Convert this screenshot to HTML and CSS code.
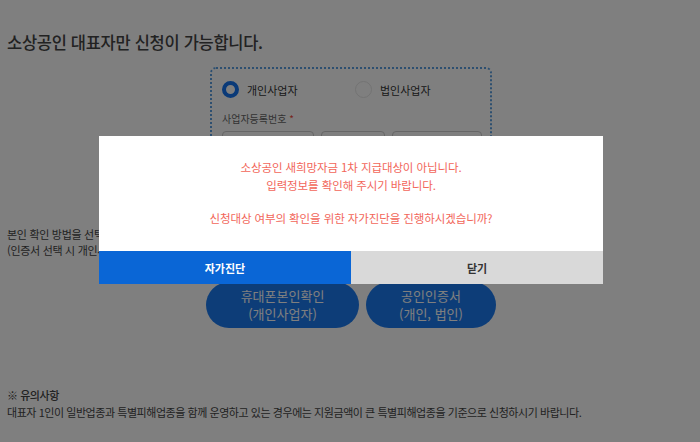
FILE: index.html
```html
<!DOCTYPE html>
<html lang="ko">
	<head>
		<meta charset="UTF-8">
		<title>소상공인 새희망자금</title>
		<link rel="stylesheet" href="styles.css">
	</head>
	<body>
		<div class="page">
			<h1 class="title">소상공인 대표자만 신청이 가능합니다.</h1>

			<div class="type-box">
				<div class="radio-row">
					<label class="radio on"><span class="dot"></span>개인사업자</label>
					<label class="radio"><span class="dot"></span>법인사업자</label>
				</div>
				<p class="field-label">사업자등록번호 <em>*</em></p>
				<div class="biz-inputs">
					<span class="input w1"></span>
					<span class="input w2"></span>
					<span class="input w3"></span>
				</div>
			</div>

			<p class="guide">
				본인 확인 방법을 선택해 주세요.<br>
				(인증서 선택 시 개인사업자, 법인사업자 모두 가능합니다.)
			</p>

			<div class="auth-buttons">
				<button class="pill wide">휴대폰본인확인<br>(개인사업자)</button>
				<button class="pill">공인인증서<br>(개인, 법인)</button>
			</div>

			<div class="notice">
				<p class="notice-title">※ 유의사항</p>
				<p>대표자 1인이 일반업종과 특별피해업종을 함께 운영하고 있는 경우에는 지원금액이 큰 특별피해업종을 기준으로 신청하시기 바랍니다.</p>
			</div>
		</div>

		<div class="dim"></div>

		<div class="modal">
			<div class="modal-body">
				<p>소상공인 새희망자금 1차 지급대상이 아닙니다.<br>입력정보를 확인해 주시기 바랍니다.</p>
				<p>신청대상 여부의 확인을 위한 자가진단을 진행하시겠습니까?</p>
			</div>
			<div class="modal-btns">
				<button class="btn-blue">자가진단</button>
				<button class="btn-grey">닫기</button>
			</div>
		</div>
	</body>
</html>
```

FILE: styles.css
```css
body {
	margin: 0;
	background: #fff;
	font-family: "Noto Sans CJK KR", "Noto Sans", sans-serif;
	color: #444;
}

.page {
	padding: 0 7px;
}

.title {
	margin: 0;
	padding-top: 30px;
	font-size: 16.5px;
	font-weight: 500;
	letter-spacing: -0.3px;
	line-height: 24px;
}

.type-box {
	margin: 13px 0 0 203px;
	width: 268px;
	height: 122px;
	border: 2px dotted #5a9ee0;
	border-radius: 6px;
	padding: 0 0 0 10px;
}

.radio-row {
	display: flex;
	margin-top: 12px;
	font-size: 11px;
	color: #333;
}

.radio {
	display: flex;
	align-items: center;
	width: 133px;
}

.radio .dot {
	width: 15px;
	height: 15px;
	border-radius: 50%;
	border: 1px solid #e6e6e6;
	margin-right: 8px;
}

.radio.on .dot {
	width: 9px;
	height: 9px;
	border: 4px solid #1474f0;
}

.field-label {
	margin: 13px 0 0;
	font-size: 10px;
	color: #666;
}

.field-label em {
	font-style: normal;
	color: #f04a3a;
}

.biz-inputs {
	display: flex;
	gap: 7px;
	margin-top: 5px;
}

.input {
	height: 30px;
	border: 1px solid #ccc;
	border-radius: 4px;
}

.w1 { width: 90px; }
.w2 { width: 62px; }
.w3 { width: 88px; }

.guide {
	margin: 33px 0 0;
	font-size: 11px;
	line-height: 16px;
	letter-spacing: -0.3px;
	color: #444;
}

.auth-buttons {
	display: flex;
	gap: 7px;
	margin: 24px 0 0 199px;
}

.pill {
	width: 130px;
	height: 46px;
	border: 0;
	border-radius: 23px;
	background: #1a7af0;
	color: #fff;
	font-family: inherit;
	font-size: 13px;
	line-height: 18px;
	padding: 0;
}

.pill.wide {
	width: 153px;
}

.notice {
	margin-top: 59px;
	font-size: 11px;
	letter-spacing: -0.45px;
	line-height: 17px;
}

.notice p {
	margin: 0;
}

.notice-title {
	font-weight: 500;
}

.dim {
	position: fixed;
	top: 0;
	left: 0;
	right: 0;
	bottom: 0;
	background: rgba(0, 0, 0, 0.5);
}

.modal {
	position: absolute;
	left: 99px;
	top: 136px;
	width: 504px;
	height: 148px;
	background: #fff;
	display: flex;
	flex-direction: column;
}

.modal-body {
	flex: 1;
	padding-top: 22px;
	text-align: center;
	color: #f2665a;
	font-size: 11.5px;
	line-height: 18px;
	letter-spacing: -0.1px;
}

.modal-body p {
	margin: 0 0 15px;
}

.modal-btns {
	display: flex;
	height: 33px;
}

.modal-btns button {
	flex: 1;
	border: 0;
	font-family: inherit;
	font-size: 11px;
	font-weight: 700;
}

.btn-blue {
	background: #0a66d6;
	color: #fff;
}

.btn-grey {
	background: #d9d9d9;
	color: #333;
}
```
